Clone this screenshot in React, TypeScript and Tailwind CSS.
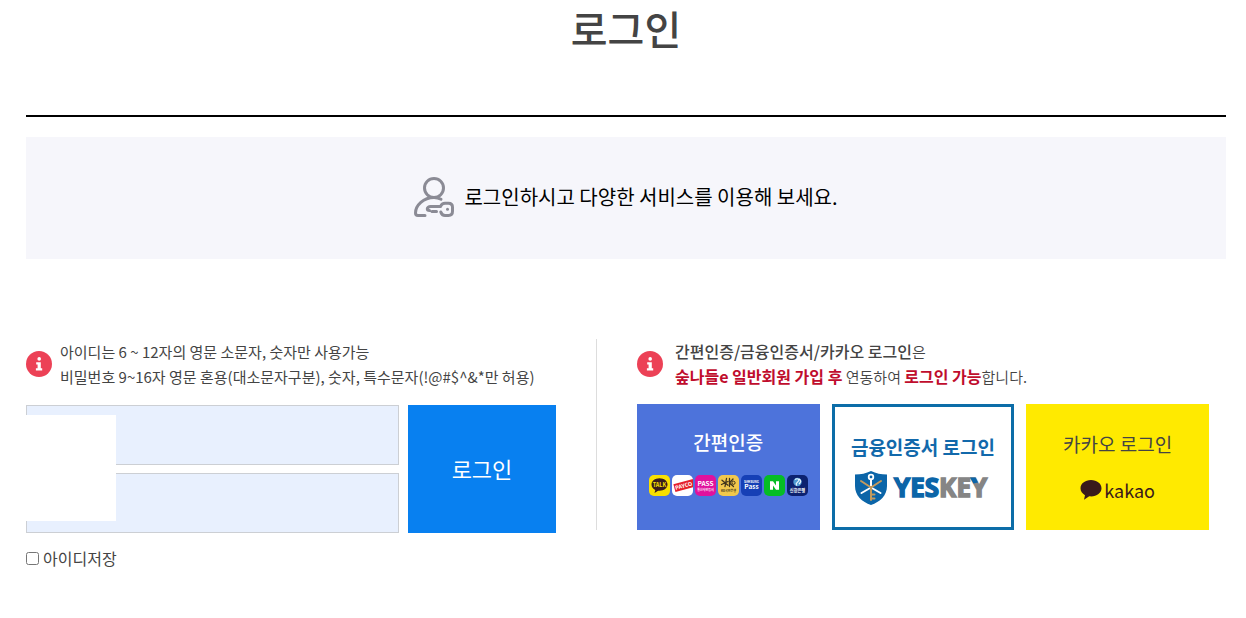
import { ReactNode } from "react";

const InfoIcon = () => (
  <svg className="size-[26px] shrink-0" viewBox="0 0 26 26" aria-hidden="true">
    <circle cx="13" cy="13" r="13" fill="#ec4156" />
    <circle cx="13.2" cy="7.9" r="1.8" fill="#fff" />
    <path d="M10.2 11.2h4.6v6h1.4v2.2h-6.3v-2.2h1.7v-3.8h-1.4z" fill="#fff" />
  </svg>
);

const UserKeyIcon = () => (
  <svg
    className="size-10 shrink-0"
    viewBox="0 0 40 40"
    fill="none"
    stroke="#8b8b95"
    strokeWidth="3"
    strokeLinecap="round"
    strokeLinejoin="round"
    aria-hidden="true"
  >
    <circle cx="20" cy="11" r="9.5" />
    <path d="M27 22.2c-2.2-1.2-4.500-1.700-7-1.700C9.500 20.500 1.500 28.500 1.500 36c0 1.600 1 2.500 2.500 2.500h7" />
    <path d="M26.500 29.500H16.500c-1.800 0-3.200 1-3.200 2.200s1 1.800 2.200 1.800M18 34.500h4.500M26.500 29.500c1-2.300 2.500-3.200 4.500-3.200h3.500c2.500 0 4 1.700 4 4v4c0 2.500-1.500 4.200-4 4.200H31c-2.200 0-3.500-1.300-4.200-3.500" />
    <circle cx="33.500" cy="32.300" r="1.500" fill="#8b8b95" stroke="none" />
  </svg>
);

const Tile = ({ fill, children }: { fill: string; children: ReactNode }) => (
  <svg
    className="size-[21px] rounded-[5px] font-['Noto_Sans_CJK_KR',sans-serif] font-bold"
    viewBox="0 0 21 21"
    textAnchor="middle"
    aria-hidden="true"
  >
    <rect width="21" height="21" fill={fill} />
    {children}
  </svg>
);

const AuthTiles = () => (
  <span className="flex gap-0.5">
    <Tile fill="#f9e000">
      <path d="M10.500 3.300c-4.600 0-8 2.800-8 6.300 0 2.300 1.500 4.300 3.800 5.400l-.8 3 3.600-2.300c5.200.6 9.400-2.200 9.400-6.100 0-3.500-3.400-6.300-8-6.300z" fill="#3a1d1d" />
      <text x="10.500" y="11.800" fontSize="5.500" fill="#f9e000">TALK</text>
    </Tile>
    <Tile fill="#fff">
      <g transform="rotate(-15 10.500 10.500)">
        <rect x="2" y="7" width="22" height="8" fill="#e5202b" />
        <text x="11.500" y="13" fontSize="5.500" fill="#fff">PAYCO</text>
      </g>
    </Tile>
    <Tile fill="#e0119d">
      <text x="10.500" y="10.500" fontSize="6.500" fill="#fff">PASS</text>
      <text x="10.500" y="15.600" fontSize="3" fill="#fff">통신사인증서</text>
    </Tile>
    <Tile fill="#f1c84c">
      <path d="M4 5.200l6 5M8.500 3.500l-1.500 8M3.500 9.500l6.500-3M11.500 3.500v8M15 4l-3.500 4 4 3.500" fill="none" stroke="#40351d" strokeWidth="1.300" strokeLinecap="round" />
      <circle cx="15.500" cy="7.800" r="1.600" fill="none" stroke="#40351d" />
      <text x="10.500" y="17" fontSize="3" fill="#40351d">KB국민은행</text>
    </Tile>
    <Tile fill="#1640b6">
      <text x="10.500" y="7.800" fontSize="3" fill="#fff">SAMSUNG</text>
      <text x="10.500" y="14.400" fontSize="6.500" fill="#fff">Pass</text>
    </Tile>
    <Tile fill="#05bd25">
      <path d="M6 6.300h3l3 4.300V6.300h3v8.500h-3L9 10.500v4.300H6z" fill="#fff" />
    </Tile>
    <Tile fill="#0c2270">
      <circle cx="10.500" cy="7" r="4.200" fill="#4f9bd3" />
      <path d="M8 4.500c2-1.500 5-.5 3.500 1.500S8 8.500 10 10.500M12 4c3 2 1.500 3.500 0 5" fill="none" stroke="#e6f5ff" strokeWidth="1.200" />
      <text x="10.500" y="17" fontSize="4.200" fill="#fff">신한은행</text>
    </Tile>
  </span>
);

const YeskeyLogo = () => (
  <svg className="h-9 w-[137px]" viewBox="0 0 137 36" role="img" aria-label="YESKEY">
    <path d="M1 4.500C7 4.500 12 3.500 17 1c5 2.500 10 3.500 16 3.500V16c0 9.500-7 16-16 19C8 32 1 25.500 1 16z" fill="#0b65a8" />
    <g fill="none" strokeLinecap="round">
      <path d="M17 9.500v8M17 17.500L7.500 23M17 17.500l9.500 5.500" stroke="#fff" strokeWidth="2" />
      <circle cx="17" cy="7" r="2.300" stroke="#fff" strokeWidth="1.800" />
      <path d="M7 11l10 6.500M27 11l-10 6.500v12.500M17 24.500h3.500M17 28.500h3.500" stroke="#c39a5e" strokeWidth="2" />
    </g>
    <text x="40" y="27" fontSize="26" fontWeight="700" strokeWidth="1.500" className="font-['Open_Sans',sans-serif]">
      <tspan fill="#0b65a8" stroke="#0b65a8">YES</tspan>
      <tspan fill="#858585" stroke="#858585">KEY</tspan>
    </text>
    <path d="M45 7l2.500 6" stroke="#fff" strokeWidth="1.200" />
    <path d="M116 7.500h5.500l2.500 5-4.500 1z" fill="#0b65a8" />
  </svg>
);

const KakaoBubble = () => (
  <svg className="h-5 w-[22px]" viewBox="0 0 22 20" aria-hidden="true">
    <path d="M11 0C5 0 .5 3.600.5 8.300c0 3 1.800 5.400 4.500 6.900L4 19.800l5.200-3.500c6.800.8 12.300-2.900 12.300-8C21.500 3.600 17 0 11 0z" fill="#391a1b" />
  </svg>
);

const LoginForm = () => (
  <form className="pr-10" onSubmit={(e) => e.preventDefault()}>
    <div className="flex items-center gap-2">
      <InfoIcon />
      <p className="text-[15px] leading-[25px]">
        아이디는 6 ~ 12자의 영문 소문자, 숫자만 사용가능
        <br />
        비밀번호 9~16자 영문 혼용(대소문자구분), 숫자, 특수문자(!@#$^&amp;*만 허용)
      </p>
    </div>
    <div className="mt-4 flex gap-[9px]">
      <div className="relative flex flex-1 flex-col gap-2">
        <input type="text" aria-label="아이디" className="h-[60px] w-full border border-[#cccfd4] bg-[#e8f0fe] px-4" />
        <input type="password" aria-label="비밀번호" className="h-[60px] w-full border border-[#cccfd4] bg-[#e8f0fe] px-4" />
        <div className="absolute top-2.5 left-0 h-[106px] w-[90px] bg-white" />
      </div>
      <button type="submit" className="w-[148px] bg-[#0880f0] pb-0.5 text-[22px] text-white">
        로그인
      </button>
    </div>
    <label className="mt-[13px] flex items-center gap-1 text-base leading-6">
      <input type="checkbox" className="size-[13px]" />
      아이디저장
    </label>
  </form>
);

const EasyLogin = () => (
  <div className="border-l border-[#dddddd] pr-[17px] pl-10">
    <div className="flex items-center gap-3">
      <InfoIcon />
      <p className="text-[15px] leading-[25px] font-[350]">
        <strong className="text-base leading-[25px] font-medium">간편인증/금융인증서/카카오 로그인</strong>은
        <br />
        <strong className="text-base leading-[25px] font-bold text-[#c00d2d]">숲나들e 일반회원 가입 후</strong> 연동하여{" "}
        <strong className="text-base leading-[25px] font-bold text-[#c00d2d]">로그인 가능</strong>합니다.
      </p>
    </div>
    <div className="mt-[15px] grid grid-cols-3 gap-3 text-[19px] leading-7">
      <button type="button" className="flex h-[126px] flex-col items-center gap-[19px] bg-[#4d73db] pt-6 font-medium text-white">
        간편인증
        <AuthTiles />
      </button>
      <button type="button" className="flex h-[126px] flex-col items-center gap-[9px] border-3 border-[#0c6da8] bg-white pt-[26px] font-bold text-[#1269ab]">
        금융인증서 로그인
        <YeskeyLogo />
      </button>
      <button type="button" className="flex h-[126px] flex-col items-center gap-5 bg-[#ffea00] pt-[26px]">
        카카오 로그인
        <span className="flex items-center gap-0.5 text-lg leading-6 text-[#391a1b]">
          <KakaoBubble />
          kakao
        </span>
      </button>
    </div>
  </div>
);

const App = () => {
  return (
    <main className="bg-white pr-5 pl-[26px] font-['Noto_Sans_CJK_KR',sans-serif] text-[#444444]">
      <h1 className="border-b-2 border-black pb-[59px] text-center text-[40px] leading-[56px] font-medium">로그인</h1>
      <div className="mt-5 flex h-[122px] items-center justify-center gap-2.5 bg-[#f6f6fb] pb-0.5">
        <UserKeyIcon />
        <p className="text-xl text-black">로그인하시고 다양한 서비스를 이용해 보세요.</p>
      </div>
      <div className="mt-20 grid grid-cols-[570fr_630fr] items-start">
        <LoginForm />
        <EasyLogin />
      </div>
    </main>
  );
};

export default App;
